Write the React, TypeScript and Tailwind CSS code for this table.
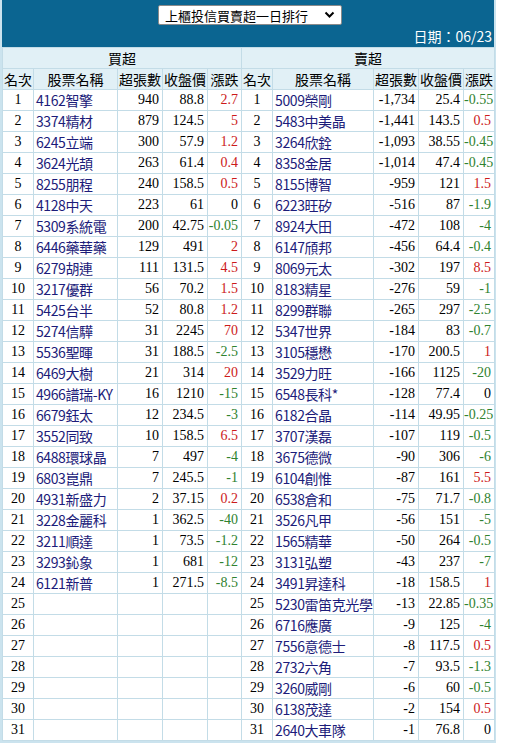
import React from "react";

type Row = [string, string, string, string, string];

const buys: Row[] = [
  ["1", "4162智擎", "940", "88.8", "2.7"],
  ["2", "3374精材", "879", "124.5", "5"],
  ["3", "6245立端", "300", "57.9", "1.2"],
  ["4", "3624光頡", "263", "61.4", "0.4"],
  ["5", "8255朋程", "240", "158.5", "0.5"],
  ["6", "4128中天", "223", "61", "0"],
  ["7", "5309系統電", "200", "42.75", "-0.05"],
  ["8", "6446藥華藥", "129", "491", "2"],
  ["9", "6279胡連", "111", "131.5", "4.5"],
  ["10", "3217優群", "56", "70.2", "1.5"],
  ["11", "5425台半", "52", "80.8", "1.2"],
  ["12", "5274信驊", "31", "2245", "70"],
  ["13", "5536聖暉", "31", "188.5", "-2.5"],
  ["14", "6469大樹", "21", "314", "20"],
  ["15", "4966譜瑞-KY", "16", "1210", "-15"],
  ["16", "6679鈺太", "12", "234.5", "-3"],
  ["17", "3552同致", "10", "158.5", "6.5"],
  ["18", "6488環球晶", "7", "497", "-4"],
  ["19", "6803崑鼎", "7", "245.5", "-1"],
  ["20", "4931新盛力", "2", "37.15", "0.2"],
  ["21", "3228金麗科", "1", "362.5", "-40"],
  ["22", "3211順達", "1", "73.5", "-1.2"],
  ["23", "3293鈊象", "1", "681", "-12"],
  ["24", "6121新普", "1", "271.5", "-8.5"],
  ["25", "", "", "", ""],
  ["26", "", "", "", ""],
  ["27", "", "", "", ""],
  ["28", "", "", "", ""],
  ["29", "", "", "", ""],
  ["30", "", "", "", ""],
  ["31", "", "", "", ""],
];

const sells: Row[] = [
  ["1", "5009榮剛", "-1,734", "25.4", "-0.55"],
  ["2", "5483中美晶", "-1,441", "143.5", "0.5"],
  ["3", "3264欣銓", "-1,093", "38.55", "-0.45"],
  ["4", "8358金居", "-1,014", "47.4", "-0.45"],
  ["5", "8155博智", "-959", "121", "1.5"],
  ["6", "6223旺矽", "-516", "87", "-1.9"],
  ["7", "8924大田", "-472", "108", "-4"],
  ["8", "6147頎邦", "-456", "64.4", "-0.4"],
  ["9", "8069元太", "-302", "197", "8.5"],
  ["10", "8183精星", "-276", "59", "-1"],
  ["11", "8299群聯", "-265", "297", "-2.5"],
  ["12", "5347世界", "-184", "83", "-0.7"],
  ["13", "3105穩懋", "-170", "200.5", "1"],
  ["14", "3529力旺", "-166", "1125", "-20"],
  ["15", "6548長科*", "-128", "77.4", "0"],
  ["16", "6182合晶", "-114", "49.95", "-0.25"],
  ["17", "3707漢磊", "-107", "119", "-0.5"],
  ["18", "3675德微", "-90", "306", "-6"],
  ["19", "6104創惟", "-87", "161", "5.5"],
  ["20", "6538倉和", "-75", "71.7", "-0.8"],
  ["21", "3526凡甲", "-56", "151", "-5"],
  ["22", "1565精華", "-50", "264", "-0.5"],
  ["23", "3131弘塑", "-43", "237", "-7"],
  ["24", "3491昇達科", "-18", "158.5", "1"],
  ["25", "5230雷笛克光學", "-13", "22.85", "-0.35"],
  ["26", "6716應廣", "-9", "125", "-4"],
  ["27", "7556意德士", "-8", "117.5", "0.5"],
  ["28", "2732六角", "-7", "93.5", "-1.3"],
  ["29", "3260威剛", "-6", "60", "-0.5"],
  ["30", "6138茂達", "-2", "154", "0.5"],
  ["31", "2640大車隊", "-1", "76.8", "0"],
];

const changeColor = (v: string) => {
  if (v === "" || v === "0") return "text-black";
  return v.startsWith("-") ? "text-[#2f822f]" : "text-[#cc1a1a]";
};

const cell = "border border-[#c3dce7] h-[21px] p-0 leading-none";
const num = "font-['Liberation_Serif','Noto_Sans_CJK_TC',serif] text-[14px]";
const name = "font-['Noto_Sans_CJK_TC',sans-serif] text-[14px] tracking-[-0.4px] text-[#1c1c7a]";

function Half({ r }: { r: Row }) {
  return (
    <>
      <td className={`${cell} ${num} text-center`}>{r[0]}</td>
      <td className={`${cell} ${name} text-left pl-[2px] whitespace-nowrap overflow-hidden`}>{r[1]}</td>
      <td className={`${cell} ${num} text-right pr-[3px]`}>{r[2]}</td>
      <td className={`${cell} ${num} text-right pr-[3px]`}>{r[3]}</td>
      <td className={`${cell} ${num} text-right pr-[3px] ${changeColor(r[4])}`}>{r[4]}</td>
    </>
  );
}

const heads = ["名次", "股票名稱", "超張數", "收盤價", "漲跌"];

export default function App() {
  return (
    <div className="w-[508px] bg-white">
      <div className="w-[496px] bg-[#cbe3ee] px-[2px] pb-[2px]">
        {/* top bar */}
        <div className="bg-[#0b6591] h-[47px] flex flex-col">
          <div className="flex justify-center pt-[5px]">
            <div className="w-[184px] h-[20px] bg-white border border-[#8a8a8a] rounded-[2px] flex items-center justify-between pl-[6px] pr-[6px] ml-[4px]">
              <span className="font-['Noto_Sans_CJK_TC',sans-serif] text-[13px] leading-none text-black whitespace-nowrap">上櫃投信買賣超一日排行</span>
              <svg width="11" height="8" viewBox="0 0 11 8" aria-hidden="true">
                <path d="M1.5 1.5 L5.5 5.5 L9.5 1.5" fill="none" stroke="#000" strokeWidth="2" />
              </svg>
            </div>
          </div>
          <div className="mt-auto pb-[4px] pr-[2px] text-right font-['Noto_Sans_CJK_TC',sans-serif] text-[14px] leading-none text-white">
            日期：06/23
          </div>
        </div>

        <table className="w-[492px] table-fixed border-collapse bg-white">
          <colgroup>
            <col className="w-[31px]" />
            <col className="w-[84px]" />
            <col className="w-[45px]" />
            <col className="w-[45px]" />
            <col className="w-[34px]" />
            <col className="w-[31px]" />
            <col className="w-[101px]" />
            <col className="w-[45px]" />
            <col className="w-[45px]" />
            <col className="w-[31px]" />
          </colgroup>
          <thead className="bg-[#e1f0f6] font-['Noto_Sans_CJK_TC',sans-serif] text-[14px] text-black">
            <tr>
              <th colSpan={5} className={`${cell} font-normal`}>買超</th>
              <th colSpan={5} className={`${cell} font-normal`}>賣超</th>
            </tr>
            <tr>
              {[...heads, ...heads].map((h, i) => (
                <th key={i} className={`${cell} font-normal whitespace-nowrap`}>{h}</th>
              ))}
            </tr>
          </thead>
          <tbody>
            {buys.map((b, i) => (
              <tr key={i}>
                <Half r={b} />
                <Half r={sells[i]} />
              </tr>
            ))}
          </tbody>
        </table>
      </div>
    </div>
  );
}
